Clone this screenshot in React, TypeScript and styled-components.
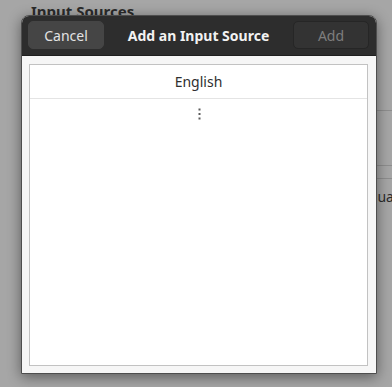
import styled, { createGlobalStyle } from 'styled-components';

const GlobalStyle = createGlobalStyle`
  html, body {
    margin: 0;
    padding: 0;
    background: #a6a6a6;
  }
  body {
    font-family: "Noto Sans", "Open Sans", sans-serif;
    overflow: hidden;
  }
`;

const Screen = styled.div`
  position: relative;
  width: 392px;
  height: 387px;
  overflow: hidden;
  background: #a6a6a6;
`;

const Behind = styled.div`
  display: flex;
  flex-direction: column;
  padding: 1px 0 0 31px;
`;

const BehindTitle = styled.h2`
  margin: 0;
  font-size: 15px;
  font-weight: 700;
  color: #2b2b2b;
  line-height: 20px;
`;

const BehindList = styled.div`
  margin: 89px 0 0 300px;
  width: 200px;
  border-top: 1px solid #8e8e8e;
  height: 54px;
  border-bottom: 1px solid #8e8e8e;
`;

const BehindButton = styled.div`
  margin: 12px 0 0 300px;
  width: 200px;
  height: 34px;
  border-top: 1px solid #8e8e8e;
  display: flex;
  align-items: center;
  padding-left: 14px;
  font-size: 14px;
  color: #2b2b2b;
`;

const Dialog = styled.div`
  position: absolute;
  left: 21px;
  top: 15px;
  width: 356px;
  height: 359px;
  box-sizing: border-box;
  border: 1px solid #4e4e4e;
  border-radius: 8px 8px 0 0;
  overflow: hidden;
  display: flex;
  flex-direction: column;
  background: #f6f6f6;
  box-shadow: 0 3px 14px rgba(0, 0, 0, 0.45);
`;

const Header = styled.div`
  height: 40px;
  flex: none;
  box-sizing: border-box;
  background: #2d2d2d;
  border-bottom: 1px solid #1f1f1f;
  display: flex;
  align-items: center;
  justify-content: space-between;
  padding: 0 7px 1px 6px;
`;

const HeaderButton = styled.button<{ $disabled?: boolean }>`
  width: 76px;
  height: 28px;
  border-radius: 5px;
  font-family: inherit;
  font-size: 14px;
  padding: 0;
  background: ${(p) => (p.$disabled ? '#333333' : '#454545')};
  border: 1px solid ${(p) => (p.$disabled ? '#262626' : '#454545')};
  color: ${(p) => (p.$disabled ? '#7e7e7e' : '#e2e2e2')};
`;

const Title = styled.div`
  font-size: 14px;
  font-weight: 700;
  color: #f2f2f2;
`;

const Body = styled.div`
  flex: 1;
  padding: 8px 8px 7px 7px;
  display: flex;
`;

const List = styled.div`
  flex: 1;
  background: #ffffff;
  border: 1px solid #c2c2c2;
  display: flex;
  flex-direction: column;
`;

const Row = styled.div`
  height: 33px;
  border-bottom: 1px solid #e4e4e4;
  display: flex;
  align-items: center;
  justify-content: center;
  font-size: 14px;
  color: #2f2f2f;
`;

const MoreRow = styled.div`
  height: 30px;
  display: flex;
  align-items: center;
  justify-content: center;
  padding-left: 1px;
`;

export default function App() {
  return (
    <Screen>
      <GlobalStyle />
      <Behind>
        <BehindTitle>Input Sources</BehindTitle>
        <BehindList />
        <BehindButton>Language</BehindButton>
      </Behind>
      <Dialog>
        <Header>
          <HeaderButton>Cancel</HeaderButton>
          <Title>Add an Input Source</Title>
          <HeaderButton $disabled>Add</HeaderButton>
        </Header>
        <Body>
          <List>
            <Row>English</Row>
            <MoreRow>
              <svg width="3" height="12" viewBox="0 0 3 12">
                <rect x="0.5" y="0.5" width="2" height="2" fill="#5a5a5a" />
                <rect x="0.5" y="5" width="2" height="2" fill="#5a5a5a" />
                <rect x="0.5" y="9.5" width="2" height="2" fill="#5a5a5a" />
              </svg>
            </MoreRow>
          </List>
        </Body>
      </Dialog>
    </Screen>
  );
}
